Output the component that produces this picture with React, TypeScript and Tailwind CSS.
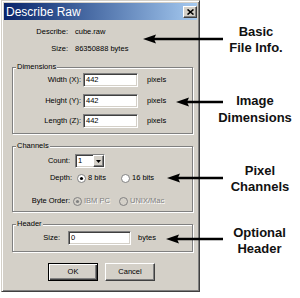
const sunken =
  "border border-t-[#808080] border-l-[#808080] border-b-white border-r-white shadow-[inset_1px_1px_0_#404040,inset_-1px_-1px_0_#d4d0c8]";
const raised =
  "border border-t-white border-l-white border-r-[#404040] border-b-[#404040] shadow-[inset_-1px_-1px_0_#808080] bg-[#d4d0c8]";
const groupBox =
  "ml-[8px] w-[181px] border border-[#808080] shadow-[inset_1px_1px_0_#fff,1px_1px_0_#fff]";

function Field({ className, children }: { className: string; children?: React.ReactNode }) {
  return <div className={`${sunken} h-[14px] bg-white pl-[2px] leading-[12px] ${className}`}>{children}</div>;
}

function Radio({ checked, disabled }: { checked?: boolean; disabled?: boolean }) {
  return (
    <svg width="9" height="9" viewBox="0 0 9 9" className="shrink-0">
      <circle cx="4.5" cy="4.5" r="4" fill={disabled ? "#d4d0c8" : "#fff"} stroke="#808080" />
      {checked && <circle cx="4.5" cy="4.5" r="1.6" fill={disabled ? "#808080" : "#000"} />}
    </svg>
  );
}

function Arrow({ className }: { className: string }) {
  return (
    <svg className={`absolute h-[10px] ${className}`}>
      <polygon points="0,5 13,0.5 11,5 13,9.5" fill="#000" />
      <rect x="10" y="3.75" width="100%" height="2.5" fill="#000" />
    </svg>
  );
}

export default function App() {
  return (
    <div className="relative h-[298px] w-[300px] overflow-hidden bg-white font-['Liberation_Sans',Arial,sans-serif]">
      {/* dialog */}
      <div className="ml-[1px] h-[292px] w-[199px] border border-t-[#d4d0c8] border-l-[#d4d0c8] border-r-[#404040] border-b-[#404040] bg-[#d4d0c8] p-[2px] text-[7.5px] leading-[12px] text-black shadow-[inset_1px_1px_0_#fff,inset_-1px_-1px_0_#808080]">
        <div className="flex h-[17px] items-center justify-between bg-linear-to-r from-[#0a246a] to-[#a6caf0] pl-[2px]">
          <span className="text-[12px] leading-none text-white">Describe Raw</span>
          <div className={`${raised} flex h-[12px] w-[14px] items-center justify-center`}>
            <svg width="7" height="6" viewBox="0 0 7 6">
              <path d="M0.5 0.5 L6.5 5.5 M6.5 0.5 L0.5 5.5" stroke="#000" strokeWidth="1.6" />
            </svg>
          </div>
        </div>

        <div className="mt-[6px] flex h-[12px] items-center">
          <span className="w-[64px] text-right">Describe:</span>
          <span className="ml-[7px]">cube.raw</span>
        </div>
        <div className="mt-[5px] flex h-[12px] items-center">
          <span className="w-[64px] text-right">Size:</span>
          <span className="ml-[7px]">86350888 bytes</span>
        </div>

        <fieldset className={`${groupBox} mt-[7px] pb-[5px]`}>
          <legend className="ml-[3px] bg-[#d4d0c8] px-[1px] leading-[10px]">Dimensions</legend>
          <div className="mt-[1px] flex h-[14px] items-center">
            <span className="w-[68px] text-right">Width (X):</span>
            <Field className="ml-[2px] w-[55px]">442</Field>
            <span className="ml-[9px]">pixels</span>
          </div>
          <div className="mt-[7px] flex h-[14px] items-center">
            <span className="w-[68px] text-right">Height (Y):</span>
            <Field className="ml-[2px] w-[55px]">442</Field>
            <span className="ml-[9px]">pixels</span>
          </div>
          <div className="mt-[6px] flex h-[14px] items-center">
            <span className="w-[68px] text-right">Length (Z):</span>
            <Field className="ml-[2px] w-[55px]">442</Field>
            <span className="ml-[9px]">pixels</span>
          </div>
        </fieldset>

        <fieldset className={`${groupBox} mt-[7px] pb-[4px]`}>
          <legend className="ml-[3px] bg-[#d4d0c8] px-[1px] leading-[10px]">Channels</legend>
          <div className="mt-[3px] flex h-[14px] items-center">
            <span className="w-[57px] text-right">Count:</span>
            <div className={`${sunken} ml-[5px] flex h-[14px] w-[30px] bg-white`}>
              <span className="flex-1 pl-[2px] leading-[12px]">1</span>
              <div className={`${raised} flex w-[11px] items-center justify-center`}>
                <svg width="5" height="3" viewBox="0 0 5 3">
                  <polygon points="0,0 5,0 2.5,3" fill="#000" />
                </svg>
              </div>
            </div>
          </div>
          <div className="mt-[4px] flex h-[12px] items-center">
            <span className="w-[59px] text-right">Depth:</span>
            <div className="ml-[5px] flex w-[44px] items-center">
              <Radio checked />
              <span className="ml-[2px]">8 bits</span>
            </div>
            <div className="flex items-center">
              <Radio />
              <span className="ml-[2px]">16 bits</span>
            </div>
          </div>
          <div className="mt-[11px] flex h-[12px] items-center">
            <span className="w-[57px] text-right">Byte Order:</span>
            <div className="ml-[3px] flex w-[46px] items-center text-[#808080] [text-shadow:1px_1px_0_#fff]">
              <Radio checked disabled />
              <span className="ml-[2px]">IBM PC</span>
            </div>
            <div className="flex items-center text-[#808080] [text-shadow:1px_1px_0_#fff]">
              <Radio disabled />
              <span className="ml-[2px]">UNIX/Mac</span>
            </div>
          </div>
        </fieldset>

        <fieldset className={`${groupBox} mt-[7px] pb-[6px]`}>
          <legend className="ml-[3px] bg-[#d4d0c8] px-[1px] leading-[10px]">Header</legend>
          <div className="mt-[2px] flex h-[14px] items-center">
            <span className="w-[47px] text-right">Size:</span>
            <Field className="ml-[8px] w-[63px]">0</Field>
            <span className="ml-[7px]">bytes</span>
          </div>
        </fieldset>

        <div className="mt-[11px] flex gap-[7px] pl-[44px]">
          <div className="flex h-[18px] w-[50px] items-center justify-center border border-black bg-[#d4d0c8] shadow-[inset_1px_1px_0_#fff,inset_-1px_-1px_0_#404040,inset_-2px_-2px_0_#808080]">
            OK
          </div>
          <div className={`${raised} flex h-[18px] w-[50px] items-center justify-center`}>Cancel</div>
        </div>
      </div>

      {/* callouts */}
      <div className="absolute left-[216px] top-[24px] w-[80px] text-center text-[13px] font-bold leading-[16px] text-[#111]">
        Basic
        <br />
        File Info.
      </div>
      <div className="absolute left-[210px] top-[92px] w-[90px] text-center text-[13px] font-bold leading-[17px] text-[#111]">
        Image
        <br />
        Dimensions
      </div>
      <div className="absolute left-[220px] top-[163px] w-[80px] text-center text-[13px] font-bold leading-[16px] text-[#111]">
        Pixel
        <br />
        Channels
      </div>
      <div className="absolute left-[219px] top-[225px] w-[81px] text-center text-[13px] font-bold leading-[16px] text-[#111]">
        Optional
        <br />
        Header
      </div>

      <Arrow className="left-[143px] top-[34px] w-[80px]" />
      <Arrow className="left-[176px] top-[97px] w-[47px]" />
      <Arrow className="left-[167px] top-[173px] w-[56px]" />
      <Arrow className="left-[166px] top-[234px] w-[57px]" />
    </div>
  );
}
